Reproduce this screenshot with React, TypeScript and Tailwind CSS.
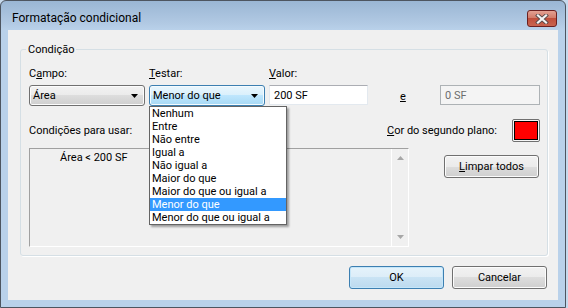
import React from 'react'

const items = [
  'Nenhum',
  'Entre',
  'Não entre',
  'Igual a',
  'Não igual a',
  'Maior do que',
  'Maior do que ou igual a',
  'Menor do que',
  'Menor do que ou igual a',
]

const Arrow = () => (
  <svg width="7" height="4" viewBox="0 0 7 4" className="shrink-0">
    <polygon points="0,0 7,0 3.5,4" fill="#000" />
  </svg>
)

const Combo: React.FC<{ value: string; active?: boolean; children?: React.ReactNode }> = ({ value, active, children }) => (
  <div className="relative w-[116px] h-[21px] shrink-0">
    <div
      className={
        active
          ? 'h-full rounded-[3px] border border-[#3c7fb1] bg-[linear-gradient(#eaf6fd_0%,#d9f0fc_50%,#bee6fd_50%,#a7d9f5_100%)] shadow-[inset_0_0_0_1px_#f4fbfe] flex items-center justify-between pl-[3px] pr-[6px]'
          : 'h-full rounded-[3px] border border-[#707070] bg-[linear-gradient(#f2f2f2_0%,#ebebeb_50%,#dddddd_50%,#cfcfcf_100%)] shadow-[inset_0_0_0_1px_#fcfcfc] flex items-center justify-between pl-[3px] pr-[6px]'
      }
    >
      <span className="leading-[15px]">{value}</span>
      <Arrow />
    </div>
    {children}
  </div>
)

const Button: React.FC<{ label: React.ReactNode; primary?: boolean }> = ({ label, primary }) => (
  <div
    className={
      primary
        ? 'w-[95px] h-[23px] rounded-[3px] border border-[#3c7fb1] bg-[linear-gradient(#e5f3fb_0%,#dcedf8_50%,#c9e3f4_50%,#bcdaef_100%)] shadow-[inset_0_0_0_1px_#c5e6f9] flex items-center justify-center leading-[15px]'
        : 'w-[95px] h-[23px] rounded-[3px] border border-[#707070] bg-[linear-gradient(#f2f2f2_0%,#ebebeb_50%,#dddddd_50%,#cfcfcf_100%)] shadow-[inset_0_0_0_1px_#fcfcfc] flex items-center justify-center leading-[15px]'
    }
  >
    {label}
  </div>
)

export default function App() {
  return (
    <div className="w-[568px] h-[308px] bg-[#c6d9ec] text-[11px] text-black font-['Roboto',sans-serif] overflow-hidden">
      <div className="w-[566px] h-[308px] flex flex-col rounded-t-[6px] border border-[#4d5560] bg-[linear-gradient(#9ab6d4_0px,#b1c9e3_22px,#b9d1ea_29px,#b9d1ea_100%)]">
        {/* Title bar */}
        <div className="h-[29px] flex items-start justify-between pl-[11px] pr-[8px]">
          <span className="mt-[10px] leading-[15px] text-[12px]">Formatação condicional</span>
          <div className="mt-[9px] w-[30px] h-[17px] rounded-[3px] border border-[#6b2020] bg-[linear-gradient(#e3a193_0%,#d27c6a_45%,#c04f3c_50%,#c9644f_100%)] flex items-center justify-center">
            <svg width="14" height="10" viewBox="0 0 14 10">
              <path d="M3 1.5 L11 8.5 M11 1.5 L3 8.5" stroke="#5a4a4a" strokeWidth="4" strokeLinecap="square" />
              <path d="M3 1.5 L11 8.5 M11 1.5 L3 8.5" stroke="#f4f4f4" strokeWidth="2.2" strokeLinecap="square" />
            </svg>
          </div>
        </div>

        {/* Client area */}
        <div className="mx-[7px] h-[270px] bg-[#f0f0f0] flex flex-col">
          <fieldset className="ml-[12px] mr-[10px] mt-[12px] border border-[#d5dfe5] rounded-[3px] pl-[8px] pr-[7px] pb-[8px] shadow-[1px_1px_0_#ffffff]">
            <legend className="ml-[-3px] px-[2px] leading-[15px]">Condição</legend>

            <div className="mt-[9px] flex leading-[15px] h-[15px]">
              <span className="w-[120px]">
                C<span className="underline">a</span>mpo:
              </span>
              <span className="w-[120px]">
                <span className="underline">T</span>estar:
              </span>
              <span>
                <span className="underline">V</span>alor:
              </span>
            </div>

            <div className="mt-[4px] flex items-start">
              <Combo value="Área" />
              <div className="ml-[4px]">
                <Combo value="Menor do que" active>
                  <div className="absolute left-0 top-[21px] w-[138px] bg-white border border-[#646464] shadow-[2px_2px_2px_rgba(0,0,0,0.35)] z-10">
                    {items.map((it, i) => (
                      <div
                        key={i}
                        className={
                          i === 7
                            ? 'h-[13px] leading-[13px] pl-[2px] bg-[#3399ff] text-white whitespace-nowrap'
                            : 'h-[13px] leading-[13px] pl-[2px] whitespace-nowrap'
                        }
                      >
                        {it}
                      </div>
                    ))}
                  </div>
                </Combo>
              </div>
              <div className="ml-[4px] w-[99px] h-[20px] bg-white border border-[#e3e9ef] border-t-[#abadb3] flex items-center pl-[4px] leading-[15px]">
                200 SF
              </div>
              <div className="w-[72px] pl-[32px] pt-[4px] leading-[15px]">
                <span className="underline">e</span>
              </div>
              <div className="w-[100px] h-[20px] bg-[#f4f4f4] border border-[#adb2b5] flex items-center pl-[4px] leading-[15px] text-[#6d6d6d]">
                0 SF
              </div>
            </div>

            <div className="mt-[13px] h-[23px] flex items-center justify-between leading-[15px]">
              <span>Condições para usar:</span>
              <div className="flex items-center">
                <span>
                  <span className="underline">C</span>or do segundo plano:
                </span>
                <div className="ml-[15px] w-[28px] h-[23px] rounded-[2px] border border-[#707070] bg-[#f6f6f6] p-[1px]">
                  <div className="w-full h-full border border-black bg-[#ff0000]" />
                </div>
              </div>
            </div>

            <div className="mt-[6px] flex items-start">
              <div className="w-[380px] h-[99px] border border-[#a0a0a0] border-r-[#ffffff] border-b-[#ffffff] flex">
                <div className="flex-1 pl-[30px] pt-[1px] leading-[15px]">Área &lt; 200 SF</div>
                <div className="w-[17px] h-full border-l border-[#ffffff] bg-[#f0f0f0] flex flex-col justify-between items-center py-[7px]">
                  <svg width="7" height="4" viewBox="0 0 7 4">
                    <polygon points="0,4 7,4 3.5,0" fill="#a7a7a7" />
                  </svg>
                  <svg width="7" height="4" viewBox="0 0 7 4">
                    <polygon points="0,0 7,0 3.5,4" fill="#a7a7a7" />
                  </svg>
                </div>
              </div>
              <div className="ml-[35px] mt-[7px]">
                <Button
                  label={
                    <span>
                      <span className="underline">L</span>impar todos
                    </span>
                  }
                />
              </div>
            </div>
          </fieldset>

          <div className="mt-[10px] mr-[11px] flex justify-end gap-[8px]">
            <Button label="OK" primary />
            <Button label="Cancelar" />
          </div>
        </div>
      </div>
    </div>
  )
}
